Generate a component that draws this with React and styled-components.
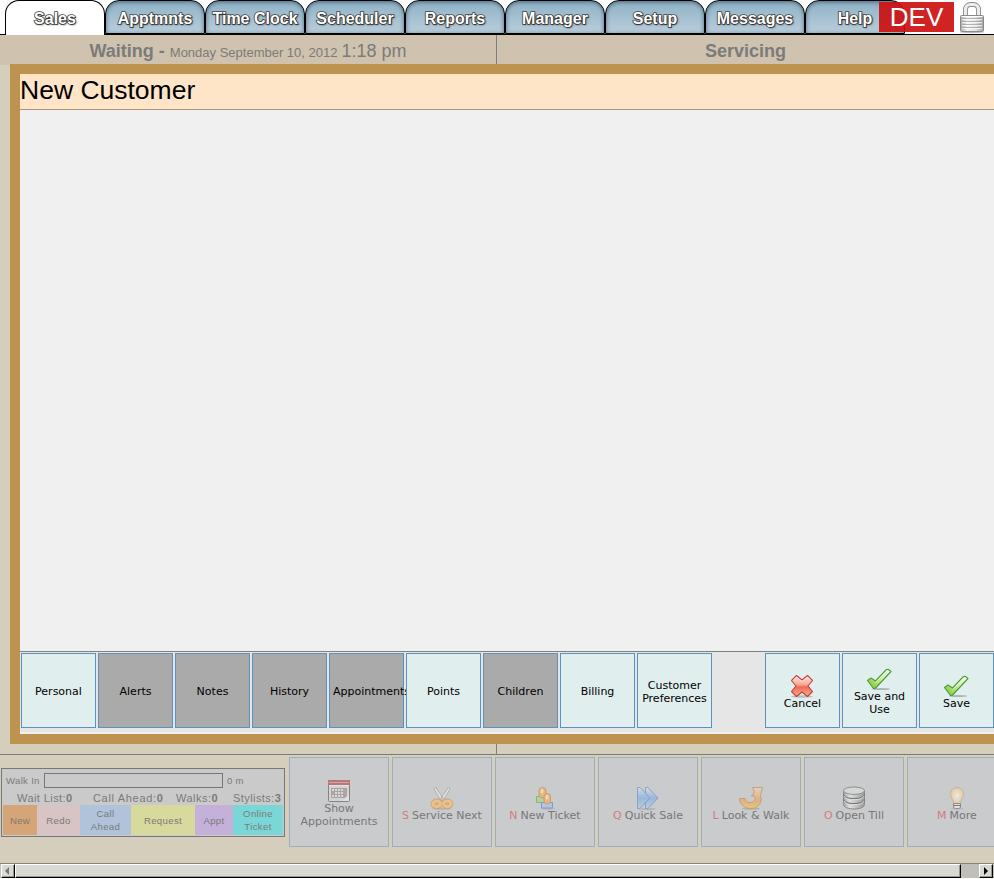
import React from 'react';
import styled, { createGlobalStyle } from 'styled-components';

const Global = createGlobalStyle`
  *, *::before { box-sizing: border-box; }
  html, body { margin: 0; padding: 0; overflow: hidden; }
  body { font-family: "Liberation Sans", Arial, sans-serif; background: #d6cebc; }
`;

const Page = styled.div`
  width: 994px;
  height: 879px;
  display: flex;
  flex-direction: column;
  overflow: hidden;
  background: #d6cebc;
`;

/* ---------- top navigation ---------- */
const TabBar = styled.nav`
  flex: none;
  display: flex;
  height: 35px;
  padding-left: 5px;
  background: #fff;
  border-bottom: 1px solid #000;
  position: relative;
`;

const Tab = styled.div`
  flex: none;
  width: 100px;
  height: ${(p) => (p.$active ? 35 : 34)}px;
  border: 1px solid #000;
  border-bottom-width: ${(p) => (p.$active ? 0 : 1)}px;
  border-radius: 14px 14px 0 0;
  background: ${(p) => (p.$active ? '#fff' : 'linear-gradient(#8fb2c6, #b9cddb)')};
  box-shadow: ${(p) => (p.$active ? 'none' : 'inset 0 1px 4px rgba(20, 45, 65, 0.6)')};
  display: flex;
  justify-content: center;
  padding-top: 9px;
`;

const TabLabel = styled.span`
  font-size: 16px;
  line-height: 18px;
  font-weight: bold;
  white-space: nowrap;
  color: #fff;
  -webkit-text-stroke: 1.6px #444;
  paint-order: stroke fill;
  text-shadow: 1px 1px 2px rgba(0, 0, 0, 0.6);
`;

const DevBadge = styled.div`
  position: absolute;
  left: 879px;
  top: 2px;
  width: 75px;
  height: 30px;
  background: rgba(204, 16, 16, 0.92);
  color: #fff;
  font-size: 26px;
  line-height: 31px;
  text-align: center;
`;

const LockSlot = styled.div`
  margin-left: auto;
  width: 34px;
  height: 34px;
  svg { display: block; }
`;

/* ---------- column headings ---------- */
const Headings = styled.div`
  flex: none;
  display: flex;
  height: 29px;
  background: #cfc2ae;
  color: #7b7b7b;
`;

const Heading = styled.div`
  width: 497px;
  border-right: ${(p) => (p.$divided ? '1px solid #7f7f7f' : '0')};
  text-align: center;
  font-size: 18px;
  line-height: 32px;
  white-space: nowrap;
`;

const DateText = styled.span`
  font-size: 13px;
`;

const TimeText = styled.span`
  margin-left: -1px;
`;

/* ---------- customer dialog ---------- */
const DialogWrap = styled.div`
  flex: none;
  padding-left: 10px;
  height: 680px;
  background: linear-gradient(#cfc2ae 1px, #d6cebc 1px);
`;

const Dialog = styled.section`
  height: 680px;
  border: 10px solid #be934f;
  border-right: 0;
  display: flex;
  flex-direction: column;
  background: #f0f0f0;
`;

const DialogTitle = styled.h1`
  margin: 0;
  flex: none;
  height: 36px;
  border-bottom: 1px solid #a8957c;
  background: #fee5c8;
  font-size: 26.5px;
  font-weight: normal;
  line-height: 32px;
`;

const DialogBody = styled.div`
  flex: 1;
`;

const ActionBar = styled.div`
  flex: none;
  height: 81px;
  margin-bottom: 2px;
  border-top: 1px solid #808080;
  background: #e6e6e6;
  padding: 1px 0 0 1px;
  display: flex;
  gap: 2px;
`;

const ActionButton = styled.button`
  flex: none;
  width: 75px;
  height: 75px;
  padding: 2px 3px 0;
  margin-left: ${(p) => (p.$pushed ? '51px' : '0')};
  border: 1px solid #5b92bf;
  background: ${(p) => (p.$disabled ? '#aaaaaa' : '#e0eeee')};
  color: #000;
  font-family: "DejaVu Sans", sans-serif;
  font-size: 11px;
  line-height: 13px;
  text-align: center;
  display: flex;
  flex-direction: column;
  align-items: ${(p) => (p.$overflowing ? 'flex-start' : 'center')};
  justify-content: center;
  overflow: visible;
  svg { flex: none; display: block; margin: 0 2px -1px 0; }
`;

/* ---------- footer ---------- */
const DividerStrip = styled.div`
  flex: none;
  height: 11px;
  border-bottom: 1px solid #7c7b78;
  &::before {
    content: '';
    display: block;
    width: 497px;
    height: 10px;
    border-right: 1px solid #7f7f7f;
  }
`;

const Footer = styled.footer`
  flex: none;
  height: 108px;
  padding: 2px 0 0 1px;
  display: flex;
  align-items: flex-start;
  overflow: hidden;
`;

const StatusPanel = styled.div`
  flex: none;
  width: 284px;
  height: 69px;
  margin: 11px 4px 0 0;
  border: 1px solid #777;
  background: #cacaca;
  color: #7a7a7a;
  padding: 4px 1px 1px;
  display: flex;
  flex-direction: column;
`;

const WalkRow = styled.div`
  display: flex;
  align-items: center;
  height: 15px;
  padding-left: 3px;
  font-size: 9.6px;
  line-height: 15px;
  letter-spacing: 0.3px;
`;

const WaitMeter = styled.div`
  width: 179px;
  height: 15px;
  margin-right: 4px;
  border: 1px solid #777;
`;

const WalkLabel = styled.span`
  width: 38px;
`;

const CountRow = styled.div`
  height: 17px;
  display: grid;
  grid-template-columns: 76px 83px 57px 1fr;
  padding: 3px 0 0 14px;
  font-size: 11px;
  line-height: 14px;
  white-space: nowrap;
`;

const Count = styled.span`
  letter-spacing: ${(p) => p.$tracking}px;
`;

const Legend = styled.div`
  display: grid;
  grid-template-columns: 34px 43px 51px 64px 38px 50px;
  height: 30px;
`;

const LegendCell = styled.div`
  background: ${(p) => p.$color};
  padding: 0 4px;
  font-size: 9.6px;
  line-height: 13px;
  letter-spacing: 0.35px;
  display: flex;
  align-items: center;
  justify-content: center;
  text-align: center;
`;

const FooterButton = styled.button`
  flex: none;
  width: 100px;
  height: 90px;
  margin-right: 3px;
  padding: ${(p) => (p.$keyed ? 3 : 2)}px 0 0;
  border: 1px solid #9bafbe;
  background: #c9cbcd;
  color: #777;
  font-family: "DejaVu Sans", sans-serif;
  font-size: 11px;
  line-height: 13px;
  text-align: center;
  display: flex;
  flex-direction: column;
  align-items: center;
  justify-content: center;
  white-space: pre;
  svg { display: block; flex: none; margin: 0 1px -1px 0; }
`;

const Hotkey = styled.span`
  color: #d77a7c;
  margin-right: 3px;
`;

/* ---------- horizontal scrollbar ---------- */
const ScrollBar = styled.div`
  flex: none;
  height: 16px;
  border-top: 1px solid #85827b;
  border-bottom: 1px solid #fff;
  background: #c1bfba;
  display: flex;
  padding-left: 1px;
`;

const ScrollArrow = styled.div`
  width: 14px;
  height: 14px;
  margin-left: ${(p) => (p.$end ? 'auto' : '0')};
  margin-right: ${(p) => (p.$end ? '1px' : '0')};
  background: #dadad5;
  border: 1px solid;
  border-color: #fff #000 #000 #fff;
  box-shadow: inset -1px -1px 0 #99968e;
  svg { display: block; }
`;

const ScrollThumb = styled.div`
  width: 946px;
  height: 14px;
  background: #dadad5;
  border: 1px solid;
  border-color: #fff #000 #000 #fff;
  box-shadow: inset -1px -1px 0 #99968e;
`;

/* ---------- icons ---------- */
const LockIcon = () => (
  <svg width="34" height="34" viewBox="0 0 34 34">
    <defs>
      <linearGradient id="lockBody" x1="0" x2="1">
        <stop offset="0" stopColor="#aaa" />
        <stop offset=".3" stopColor="#f4f4f4" />
        <stop offset=".65" stopColor="#e2e2e2" />
        <stop offset="1" stopColor="#a5a5a5" />
      </linearGradient>
    </defs>
    <ellipse cx="12" cy="32" rx="12" ry="1.200" fill="#bbb" />
    <path d="M5.500 16V9.500a5 5 0 0 1 5-5h3a5 5 0 0 1 5 5V16" fill="none" stroke="#8c8c8c" strokeWidth="5" />
    <path d="M5.500 16V9.500a5 5 0 0 1 5-5h3a5 5 0 0 1 5 5V16" fill="none" stroke="#ececec" strokeWidth="3.200" />
    <rect x="0.500" y="15.500" width="23" height="16" rx="1" fill="url(#lockBody)" stroke="#8a8a8a" />
    <path d="M1.500 16.500h21" stroke="#fff" />
    <path d="M2 18.500h20M2 21.500h20M2 24.500h20M2 27.500h20" stroke="#999" opacity=".7" />
    <path d="M2 19.500h20M2 22.500h20M2 25.500h20M2 28.500h20" stroke="#fff" opacity=".7" />
  </svg>
);

const CancelIcon = () => (
  <svg width="24" height="24" viewBox="0 0 24 24">
    <defs>
      <linearGradient id="cx" x1="0" y1="0" x2="0" y2="1">
        <stop offset="0" stopColor="#fde0d9" />
        <stop offset=".42" stopColor="#f5ab9c" />
        <stop offset=".55" stopColor="#ee6b54" />
        <stop offset="1" stopColor="#f9b0a2" />
      </linearGradient>
    </defs>
    <ellipse cx="12" cy="22.500" rx="11" ry="1.200" fill="#000" opacity=".2" />
    <path d="M6.500 1.500L12 6l5.500-4.500 5 5L18 12l4.500 5.500-5 5L12 18l-5.500 4.500-5-5L6 12 1.500 6.500z" fill="url(#cx)" stroke="#c5402f" strokeWidth="1.100" strokeLinejoin="round" />
    <path d="M3 6.500L6.500 3 12 7.500 17.500 3 21 6.500" fill="none" stroke="#fff" opacity=".6" />
  </svg>
);

const CheckIcon = ({ id }) => (
  <svg width="26" height="24" viewBox="0 0 26 24">
    <defs>
      <linearGradient id={id} x1="1" y1="0" x2="0" y2="1">
        <stop offset="0" stopColor="#f4fbef" />
        <stop offset=".45" stopColor="#cdeea5" />
        <stop offset="1" stopColor="#6fc312" />
      </linearGradient>
    </defs>
    <ellipse cx="15" cy="22" rx="9" ry="1" fill="#000" opacity=".24" />
    <path d="M1.500 13.500L5 11l4.500 3L20 3q1-1 2.500-.5L25 4.500 11 19.500 9 21.500H7.500z" fill={`url(#${id})`} stroke="#4c9a3c" strokeWidth="1.100" strokeLinejoin="round" />
    <path d="M9.500 15.500L21 3.500" stroke="#fff" opacity=".6" />
  </svg>
);

const CalendarIcon = () => (
  <svg width="24" height="24" viewBox="0 0 24 24">
    <rect x="1.500" y="1.500" width="21" height="21" rx="1" fill="#d3d3d3" stroke="#858587" />
    <path d="M1 1h22v5H1z" fill="#b97779" />
    <path d="M2 3.500h20" stroke="#d4a2a3" />
    <path d="M2 6.500h20" stroke="#e2e2e2" />
    <path d="M4 9h16v10H4z" fill="#a5a5a5" />
    <path d="M5 10h2v2H5zm3 0h2v2H8zm3 0h2v2h-2zm3 0h2v2h-2zM8 13h2v2H8zm3 0h2v2h-2zm3 0h2v2h-2zM5 16h2v2H5zm3 0h2v2H8zm3 0h2v2h-2zm3 0h2v2h-2z" fill="#d8d8d8" />
    <path d="M17 10h2v2h-2zm0 3h2v2h-2zM5 13h2v2H5z" fill="#cf9899" />
    <path d="M15 22l7-7v7z" fill="#e0e0e0" />
  </svg>
);

const ScissorsIcon = () => (
  <svg width="24" height="24" viewBox="0 0 24 24">
    <ellipse cx="12" cy="22.800" rx="10" ry=".9" fill="#aaa" opacity=".7" />
    <path d="M4 3l1.500-2 8 12-2 3zM20 3l-1.500-2-8 12 2 3z" fill="#dedede" stroke="#a3a5a6" strokeWidth=".8" />
    <ellipse cx="6.700" cy="17.800" rx="3.700" ry="2.800" fill="none" stroke="#d3a173" strokeWidth="4.800" />
    <ellipse cx="17.300" cy="17.800" rx="3.700" ry="2.800" fill="none" stroke="#d3a173" strokeWidth="4.800" />
    <ellipse cx="6.700" cy="17.800" rx="3.700" ry="2.800" fill="none" stroke="#e6c28d" strokeWidth="3.200" />
    <ellipse cx="17.300" cy="17.800" rx="3.700" ry="2.800" fill="none" stroke="#e6c28d" strokeWidth="3.200" />
  </svg>
);

const UsersIcon = () => (
  <svg width="24" height="24" viewBox="0 0 24 24">
    <path d="M3.500 10.500h8v6h-8z" fill="#b0d3a1" stroke="#85b478" />
    <rect x="6" y="1.500" width="7" height="10.500" rx="3.500" fill="#e4b886" stroke="#cf9b67" />
    <ellipse cx="9" cy="5" rx="1.500" ry="2.500" fill="#eed8b9" />
    <ellipse cx="15" cy="22.700" rx="7" ry=".8" fill="#aaa" opacity=".7" />
    <path d="M8.500 16.500h11v5.500h-11z" fill="#b4c5e0" stroke="#8499c5" />
    <rect x="11" y="7.500" width="6.500" height="10.500" rx="3.200" fill="#e4b886" stroke="#cf9b67" />
    <ellipse cx="14" cy="11" rx="1.500" ry="2.500" fill="#eed8b9" />
  </svg>
);

const ForwardIcon = () => (
  <svg width="24" height="24" viewBox="0 0 24 24">
    <defs>
      <linearGradient id="fw" x1="0" y1="0" x2="0" y2="1">
        <stop offset="0" stopColor="#d3dce6" />
        <stop offset=".5" stopColor="#99b6da" />
        <stop offset="1" stopColor="#b8cde4" />
      </linearGradient>
    </defs>
    <ellipse cx="11" cy="23" rx="9" ry=".8" fill="#aaa" />
    <path d="M9.500 1.500L12 1.500 22 12 12 22.500H9.500z" fill="url(#fw)" stroke="#8e9fcb" />
    <path d="M1.500 1.500H4L14 12 4 22.500H1.500z" fill="url(#fw)" stroke="#8e9fcb" />
  </svg>
);

const TurnIcon = () => (
  <svg width="24" height="24" viewBox="0 0 24 24">
    <defs>
      <linearGradient id="tu" x1="0" y1="0" x2="0" y2="1">
        <stop offset="0" stopColor="#dfd0c8" />
        <stop offset=".6" stopColor="#deb27d" />
        <stop offset="1" stopColor="#e4c67c" />
      </linearGradient>
    </defs>
    <ellipse cx="12" cy="22.700" rx="9" ry="1" fill="#aaa" opacity=".8" />
    <path d="M13.500 1.500h10l-2 8c2.500 7-2.500 13-9.500 13C5 22.500.500 18 .500 12.500H6c0 2.500 2 4 5 4 4 0 6-3 4.500-6.500h-3L15.500 6z" fill="url(#tu)" stroke="#cb9772" strokeLinejoin="round" strokeWidth=".9" />
  </svg>
);

const DatabaseIcon = () => (
  <svg width="24" height="24" viewBox="0 0 24 24">
    <defs>
      <linearGradient id="db" x1="0" x2="1">
        <stop offset="0" stopColor="#a6a6a6" />
        <stop offset=".3" stopColor="#e0e0e0" />
        <stop offset="1" stopColor="#9c9c9c" />
      </linearGradient>
    </defs>
    <path d="M1.500 4.500v14c0 6 21 6 21 0v-14z" fill="url(#db)" stroke="#8a8a8a" />
    <path d="M1.500 8.500c0 5.500 21 5.500 21 0M1.500 13.500c0 5.500 21 5.500 21 0" fill="none" stroke="#7b7b7b" strokeWidth="1.300" />
    <path d="M2 10c1 5 19 5 20 0M2 15c1 5 19 5 20 0" fill="none" stroke="#ddd" />
    <ellipse cx="12" cy="4.700" rx="10.500" ry="3.700" fill="#d5d6d6" stroke="#8f8f8f" />
  </svg>
);

const BulbIcon = () => (
  <svg width="24" height="24" viewBox="0 0 24 24">
    <defs>
      <radialGradient id="bu">
        <stop offset="0" stopColor="#eee8df" />
        <stop offset="1" stopColor="#decba8" />
      </radialGradient>
    </defs>
    <ellipse cx="12" cy="22.500" rx="6" ry="1" fill="#aaa" opacity=".7" />
    <path d="M8.500 17.500c0-4-3-5.500-3-10a6.500 6 0 0 1 13 0c0 4.500-3 6-3 10z" fill="url(#bu)" stroke="#c8b18d" strokeWidth=".9" />
    <path d="M8.500 17.500h7v4l-2 1h-3l-2-1z" fill="#e0e0e0" stroke="#8e8e8e" />
    <path d="M8.500 19.500h7" stroke="#777" />
  </svg>
);

const tabs = ['Sales', 'Apptmnts', 'Time Clock', 'Scheduler', 'Reports', 'Manager', 'Setup', 'Messages', 'Help'];

const sections = [
  { label: 'Personal' },
  { label: 'Alerts', disabled: true },
  { label: 'Notes', disabled: true },
  { label: 'History', disabled: true },
  { label: 'Appointments', disabled: true, overflowing: true },
  { label: 'Points' },
  { label: 'Children', disabled: true },
  { label: 'Billing' },
  { label: 'Customer Preferences' },
];

const counts = [
  ['Wait List', 0, 0.42],
  ['Call Ahead', 0, 0.68],
  ['Walks', 0, 0.5],
  ['Stylists', 3, 0.42],
];

const legend = [
  ['New', '#d5a577'],
  ['Redo', '#d8c4c4'],
  ['Call Ahead', '#b0c3da'],
  ['Request', '#d8d99c'],
  ['Appt', '#c4b0d9'],
  ['Online Ticket', '#7ad7d7'],
];

const commands = [
  { label: 'Show\nAppointments', Icon: CalendarIcon },
  { hotkey: 'S', label: 'Service Next', Icon: ScissorsIcon },
  { hotkey: 'N', label: 'New Ticket', Icon: UsersIcon },
  { hotkey: 'Q', label: 'Quick Sale', Icon: ForwardIcon },
  { hotkey: 'L', label: 'Look & Walk', Icon: TurnIcon },
  { hotkey: 'O', label: 'Open Till', Icon: DatabaseIcon },
  { hotkey: 'M', label: 'More', Icon: BulbIcon },
];

export default function App() {
  return (
    <Page>
      <Global />
      <TabBar>
        {tabs.map((t, i) => (
          <Tab key={t} $active={i === 0}><TabLabel>{t}</TabLabel></Tab>
        ))}
        <LockSlot><LockIcon /></LockSlot>
        <DevBadge>DEV</DevBadge>
      </TabBar>
      <Headings>
        <Heading $divided>
          <b>Waiting -</b> <DateText>Monday September 10, 2012</DateText> <TimeText>1:18 pm</TimeText>
        </Heading>
        <Heading><b>Servicing</b></Heading>
      </Headings>
      <DialogWrap>
        <Dialog>
          <DialogTitle>New Customer</DialogTitle>
          <DialogBody />
          <ActionBar>
            {sections.map((s) => (
              <ActionButton key={s.label} $disabled={s.disabled} $overflowing={s.overflowing}>{s.label}</ActionButton>
            ))}
            <ActionButton $pushed><CancelIcon />Cancel</ActionButton>
            <ActionButton><CheckIcon id="useCheck" />Save and Use</ActionButton>
            <ActionButton><CheckIcon id="saveCheck" />Save</ActionButton>
          </ActionBar>
        </Dialog>
      </DialogWrap>
      <DividerStrip />
      <Footer>
        <StatusPanel>
          <WalkRow><WalkLabel>Walk In</WalkLabel><WaitMeter />0 m</WalkRow>
          <CountRow>
            {counts.map(([name, n, tracking]) => (
              <Count key={name} $tracking={tracking}>{name}:<b>{n}</b></Count>
            ))}
          </CountRow>
          <Legend>
            {legend.map(([name, color]) => <LegendCell key={name} $color={color}>{name}</LegendCell>)}
          </Legend>
        </StatusPanel>
        {commands.map(({ hotkey, label, Icon }) => (
          <FooterButton key={label} $keyed={Boolean(hotkey)}>
            <Icon />
            <span>{hotkey && <Hotkey>{hotkey}</Hotkey>}{label}</span>
          </FooterButton>
        ))}
      </Footer>
      <ScrollBar>
        <ScrollArrow>
          <svg width="12" height="12" viewBox="0 0 12 12"><path d="M7 2v8L3 6z" fill="#777" /></svg>
        </ScrollArrow>
        <ScrollThumb />
        <ScrollArrow $end>
          <svg width="12" height="12" viewBox="0 0 12 12"><path d="M4 2v8l4-4z" fill="#000" /></svg>
        </ScrollArrow>
      </ScrollBar>
    </Page>
  );
}
